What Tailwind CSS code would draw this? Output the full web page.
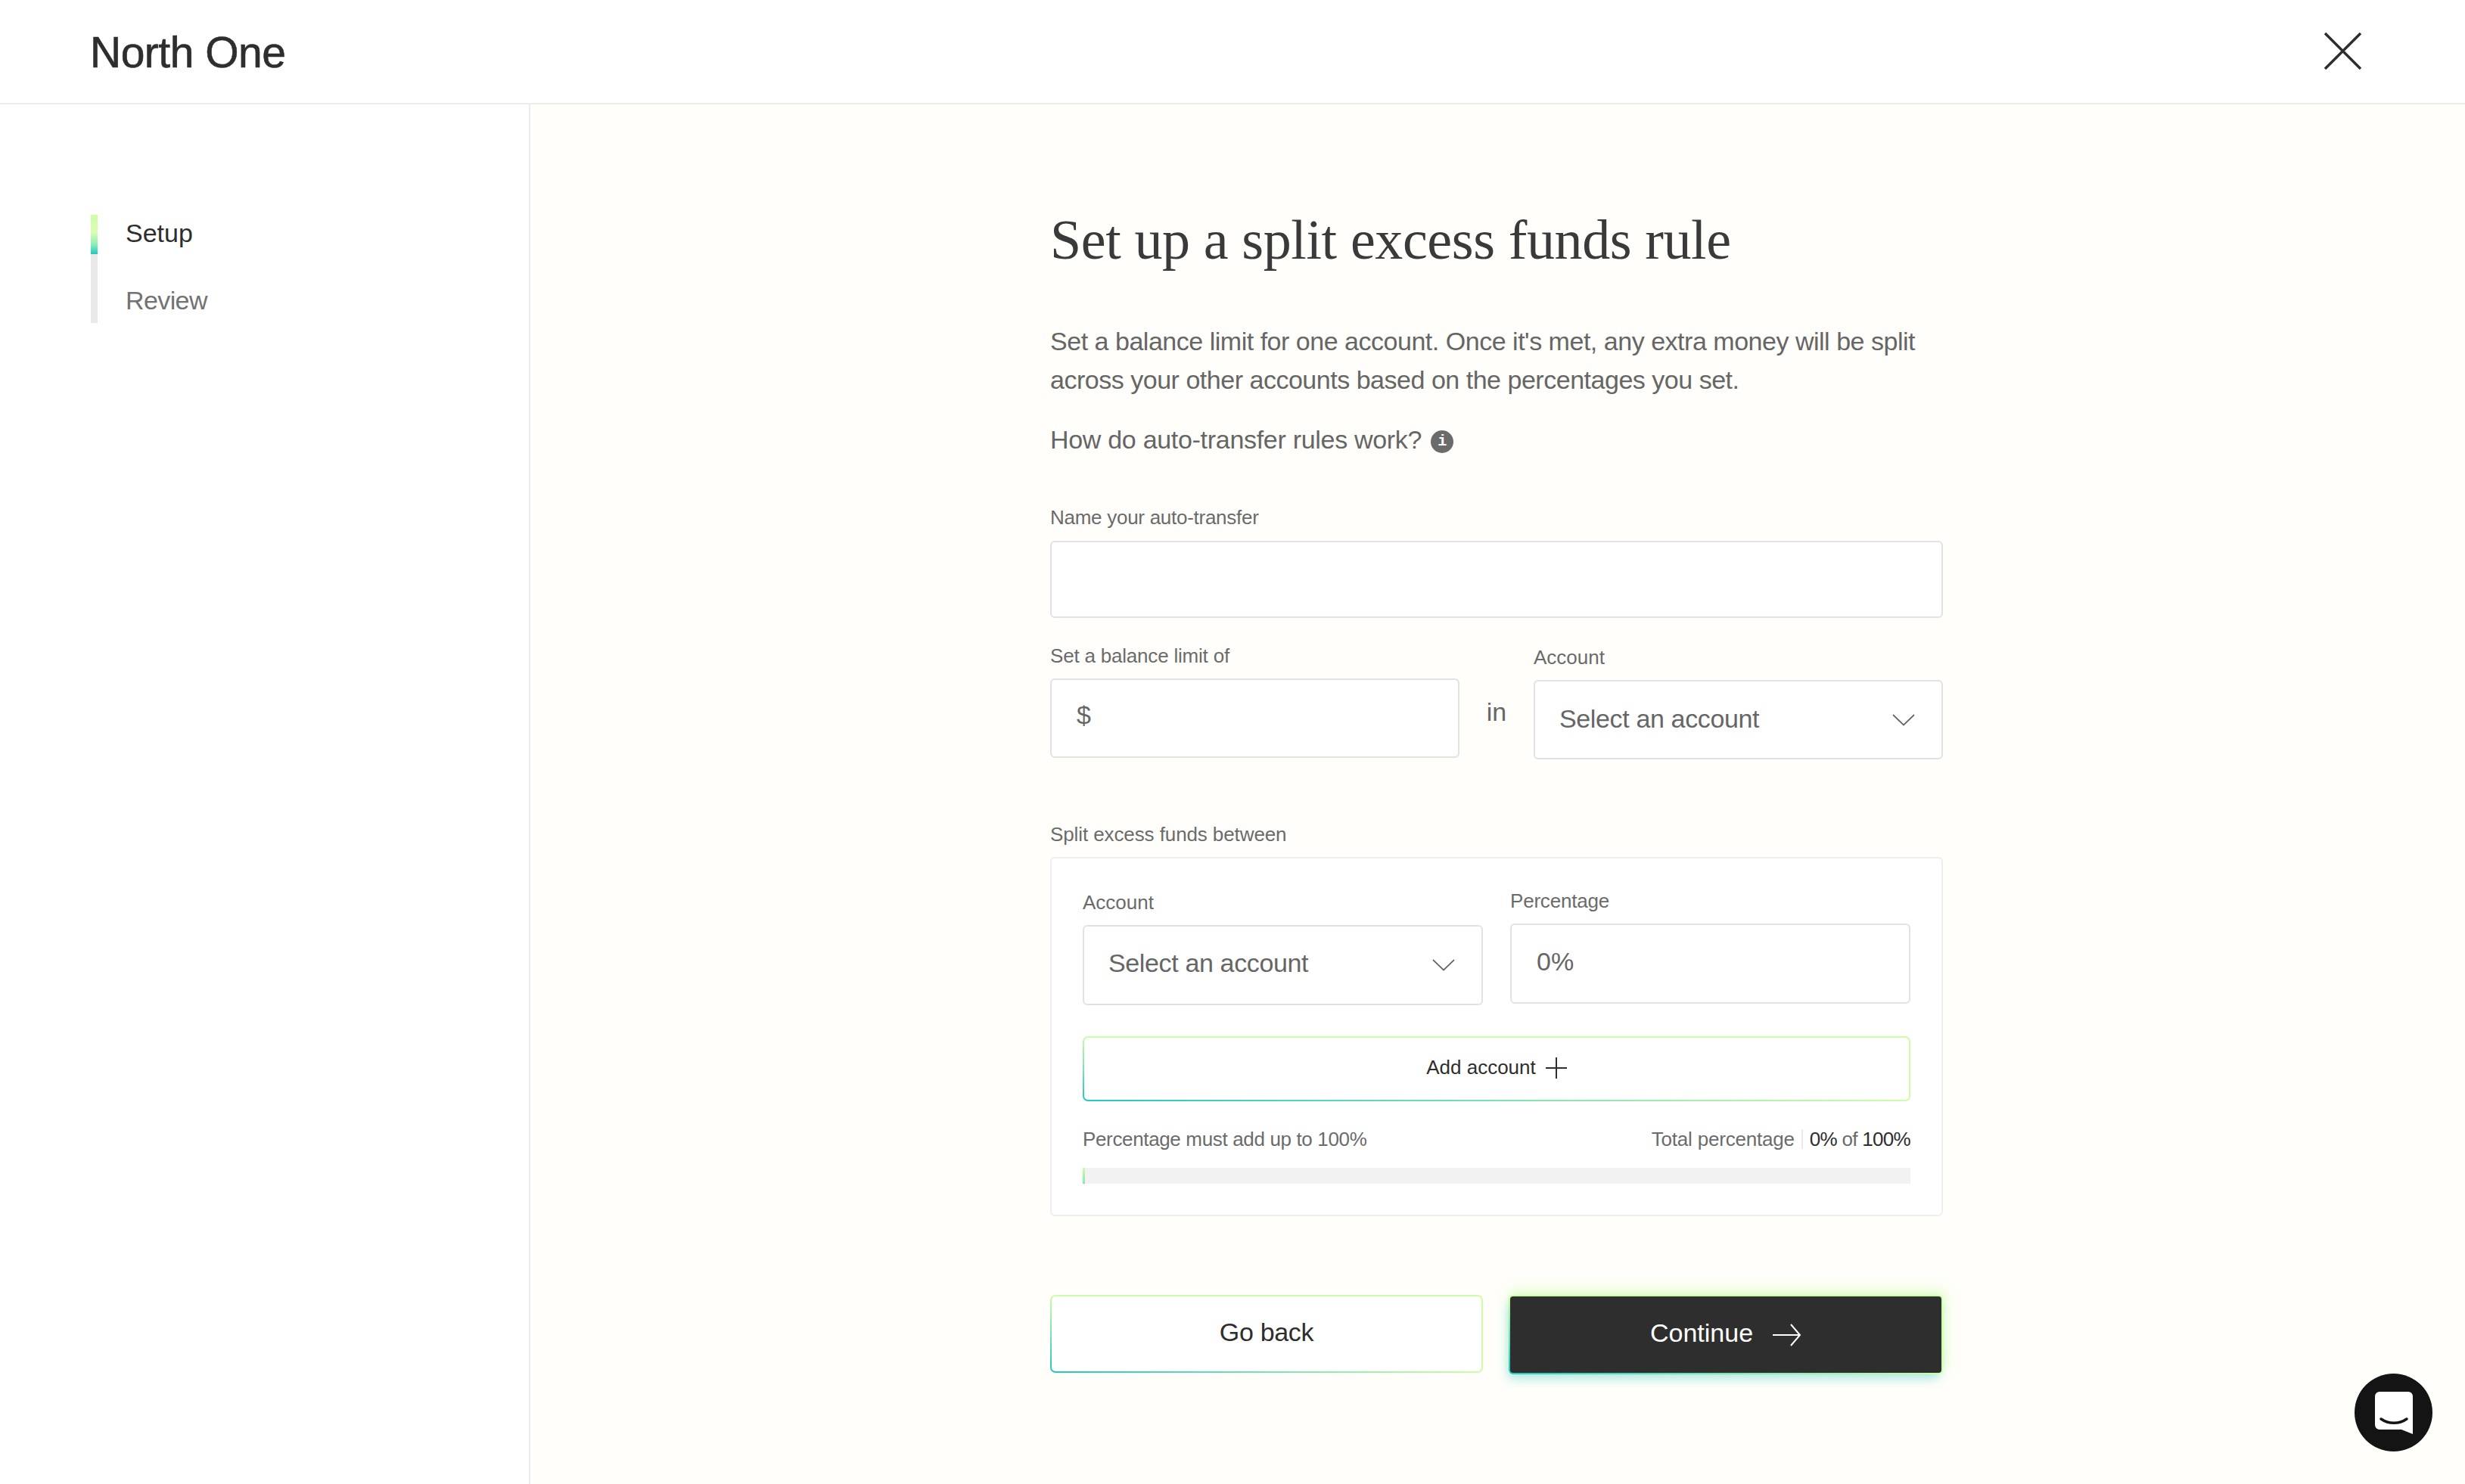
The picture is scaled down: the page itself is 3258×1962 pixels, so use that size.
<!DOCTYPE html>
<html lang="en">
<head>
  <meta charset="UTF-8">
  <title>Set up a split excess funds rule - North One</title>
  <script src="https://cdn.jsdelivr.net/npm/@tailwindcss/browser@4"></script>
</head>
<body class="bg-white text-[#2e2e2e] font-['Liberation_Sans',sans-serif]">
  <div class="relative flex flex-col h-[1962px] overflow-hidden">
    <header class="flex items-center justify-between h-[138px] shrink-0 border-b-2 border-[#ececec] pl-[119px] pr-[137px]">
      <span class="text-[57px] leading-none tracking-[-0.5px] [-webkit-text-stroke:0.6px_#2e2e2e] pt-[2px]">North One</span>
      <svg class="w-[49px] h-[49px] mt-[-2px]" viewBox="0 0 49 49" fill="none" stroke="#2e2e2e" stroke-width="3.5"><path d="M1 1l47 47M48 1L1 48"/></svg>
    </header>

    <div class="flex flex-1">
      <aside class="w-[701px] shrink-0 border-r-2 border-[#ececec] pt-[146px] pl-[120px]">
        <div class="flex gap-[37px]">
          <div class="w-[9px] h-[143px] bg-[#e9e9e9]">
            <div class="h-[52px] bg-[linear-gradient(to_bottom,#cdfea5,#dcfcb4_45%,#8cf0b4_75%,#1fc7c2)]"></div>
          </div>
          <div class="flex flex-col gap-[50px] pt-[5px] text-[34px] leading-[39px]">
            <span>Setup</span>
            <span class="text-[#737373] tracking-[-0.6px]">Review</span>
          </div>
        </div>
      </aside>

      <main class="flex-1 bg-[#fffefa] pl-[687px]">
        <div class="w-[1180px]">
          <h1 class="mt-[134px] font-['Liberation_Serif',serif] text-[74px] leading-[90px] tracking-[-0.4px] text-[#3a3a3a]">Set up a split excess funds rule</h1>
          <p class="mt-[64px] text-[34px] leading-[51px] tracking-[-0.48px] text-[#666]">Set a balance limit for one account. Once it's met, any extra money will be split<br>across your other accounts based on the percentages you set.</p>
          <p class="mt-[28px] flex items-center gap-[12px] text-[34px] leading-[51px] tracking-[-0.3px] text-[#666]">
            How do auto-transfer rules work?
            <span class="flex items-center justify-center w-[30px] h-[30px] mt-[4px] rounded-full bg-[#6b6b6b] font-['Liberation_Mono',monospace] text-[20px] font-bold leading-none text-white">i</span>
          </p>

          <label class="block mt-[62px] text-[26px] leading-[30px] tracking-[-0.27px] text-[#6b6b6b]">Name your auto-transfer</label>
          <div class="mt-[16px] h-[102px] rounded-[6px] border-2 border-[#e2e2e4] bg-white"></div>

          <div class="flex mt-[35px]">
            <div class="w-[541px]">
              <label class="block text-[26px] leading-[30px] tracking-[-0.2px] text-[#6b6b6b]">Set a balance limit of</label>
              <div class="flex items-center mt-[15px] h-[105px] rounded-[6px] border-2 border-[#e2e2e4] bg-white pl-[33px] pb-[8px] text-[34px] text-[#666]">$</div>
            </div>
            <span class="w-[98px] pt-[64px] text-center text-[34px] leading-[51px] text-[#666]">in</span>
            <div class="w-[541px] pt-[2px]">
              <label class="block text-[26px] leading-[30px] text-[#6b6b6b]">Account</label>
              <div class="flex items-center justify-between mt-[15px] h-[105px] rounded-[6px] border-2 border-[#e2e2e4] bg-white pl-[32px] pr-[35px] pb-[2px] text-[34px] tracking-[-0.36px] text-[#666]">
                Select an account
                <svg class="w-[30px] h-[16px] mt-[2px]" viewBox="0 0 30 16" fill="none" stroke="#666" stroke-width="1.750"><path d="M1 1l14 13.500L29 1"/></svg>
              </div>
            </div>
          </div>

          <label class="block mt-[84px] text-[26px] leading-[30px] tracking-[-0.1px] text-[#6b6b6b]">Split excess funds between</label>
          <div class="mt-[15px] h-[475px] rounded-[6px] border-2 border-[#eeeeee] bg-white px-[41px] pt-[41px]">
            <div class="grid grid-cols-2 gap-[36px]">
              <div class="pt-[2px]">
                <label class="block text-[26px] leading-[30px] text-[#6b6b6b]">Account</label>
                <div class="flex items-center justify-between mt-[15px] h-[106px] rounded-[6px] border-2 border-[#e2e2e4] bg-white pl-[32px] pr-[35px] pb-[6px] text-[34px] tracking-[-0.36px] text-[#666]">
                  Select an account
                  <svg class="w-[30px] h-[16px] mt-[6px]" viewBox="0 0 30 16" fill="none" stroke="#666" stroke-width="1.750"><path d="M1 1l14 13.500L29 1"/></svg>
                </div>
              </div>
              <div>
                <label class="block text-[26px] leading-[30px] tracking-[-0.2px] text-[#6b6b6b]">Percentage</label>
                <div class="flex items-center mt-[15px] h-[106px] rounded-[6px] border-2 border-[#e2e2e4] bg-white pl-[33px] pb-[6px] text-[34px] text-[#666]">0%</div>
              </div>
            </div>

            <div class="mt-[41px] h-[86px] rounded-[7px] p-[2px] bg-[linear-gradient(to_top_right,#1fc7c2,#cdfea5_50%)]">
              <button class="flex items-center justify-center gap-[13px] w-full h-full rounded-[5px] bg-white pb-[3px] text-[26px]">
                Add account
                <svg class="w-[28px] h-[28px]" viewBox="0 0 28 28" fill="none" stroke="#2e2e2e" stroke-width="2"><path d="M0 14h28M14 0v28"/></svg>
              </button>
            </div>

            <div class="flex items-center justify-between mt-[35px] text-[26px] leading-[30px] text-[#6b6b6b]">
              <span class="tracking-[-0.35px]">Percentage must add up to 100%</span>
              <span class="flex items-center tracking-[-0.2px]">Total percentage<i class="mx-[9px] h-[26px] w-[2px] bg-[#e9e9e9]"></i><span class="tracking-[-0.7px] text-[#2e2e2e]">0% <span class="text-[#6b6b6b]">of</span> 100%</span></span>
            </div>
            <div class="mt-[23px] h-[21px] bg-[#f2f2f2]">
              <div class="w-[3px] h-full bg-[linear-gradient(to_bottom,#cdfea5,#7fecb0)]"></div>
            </div>
          </div>

          <div class="grid grid-cols-2 gap-[36px] mt-[104px]">
            <div class="h-[103px] rounded-[7px] p-[2px] bg-[linear-gradient(to_top_right,#1fc7c2,#cdfea5_50%)]">
              <button class="w-full h-full rounded-[5px] bg-white text-[34px] tracking-[-0.3px] pb-[4px]">Go back</button>
            </div>
            <div class="ml-[-2px] h-[105px] rounded-[6px] p-[2px] bg-[linear-gradient(to_top_right,#1fc7c2,#cdfea5_50%)] shadow-[-3px_8px_14px_-2px_rgba(31,199,194,0.35),3px_-6px_16px_0_rgba(205,254,165,0.6)]">
              <button class="flex items-center justify-center gap-[26px] w-full h-full rounded-[4px] bg-[#2e2e2e] text-[34px] text-white pb-[4px]">
                Continue
                <svg class="w-[38px] h-[30px] mt-[4px]" viewBox="0 0 38 30" fill="none" stroke="#fff" stroke-width="2"><path d="M0 15h36M24 1l12 14-12 14"/></svg>
              </button>
            </div>
          </div>
        </div>
      </main>
    </div>

    <button class="absolute left-[3112px] top-[1816px] flex items-center justify-center w-[103px] h-[103px] rounded-full bg-[#141414]">
      <svg class="w-[50px] h-[56px]" viewBox="0 0 50 56" fill="none">
        <path d="M6 0h38a6 6 0 0 1 6 6v50l-15-6H6a6 6 0 0 1-6-6V6a6 6 0 0 1 6-6z" fill="#fff"/>
        <path d="M8 36c10 7 24 7 34 0" stroke="#141414" stroke-width="3.500" stroke-linecap="round"/>
      </svg>
    </button>
  </div>
</body>
</html>
